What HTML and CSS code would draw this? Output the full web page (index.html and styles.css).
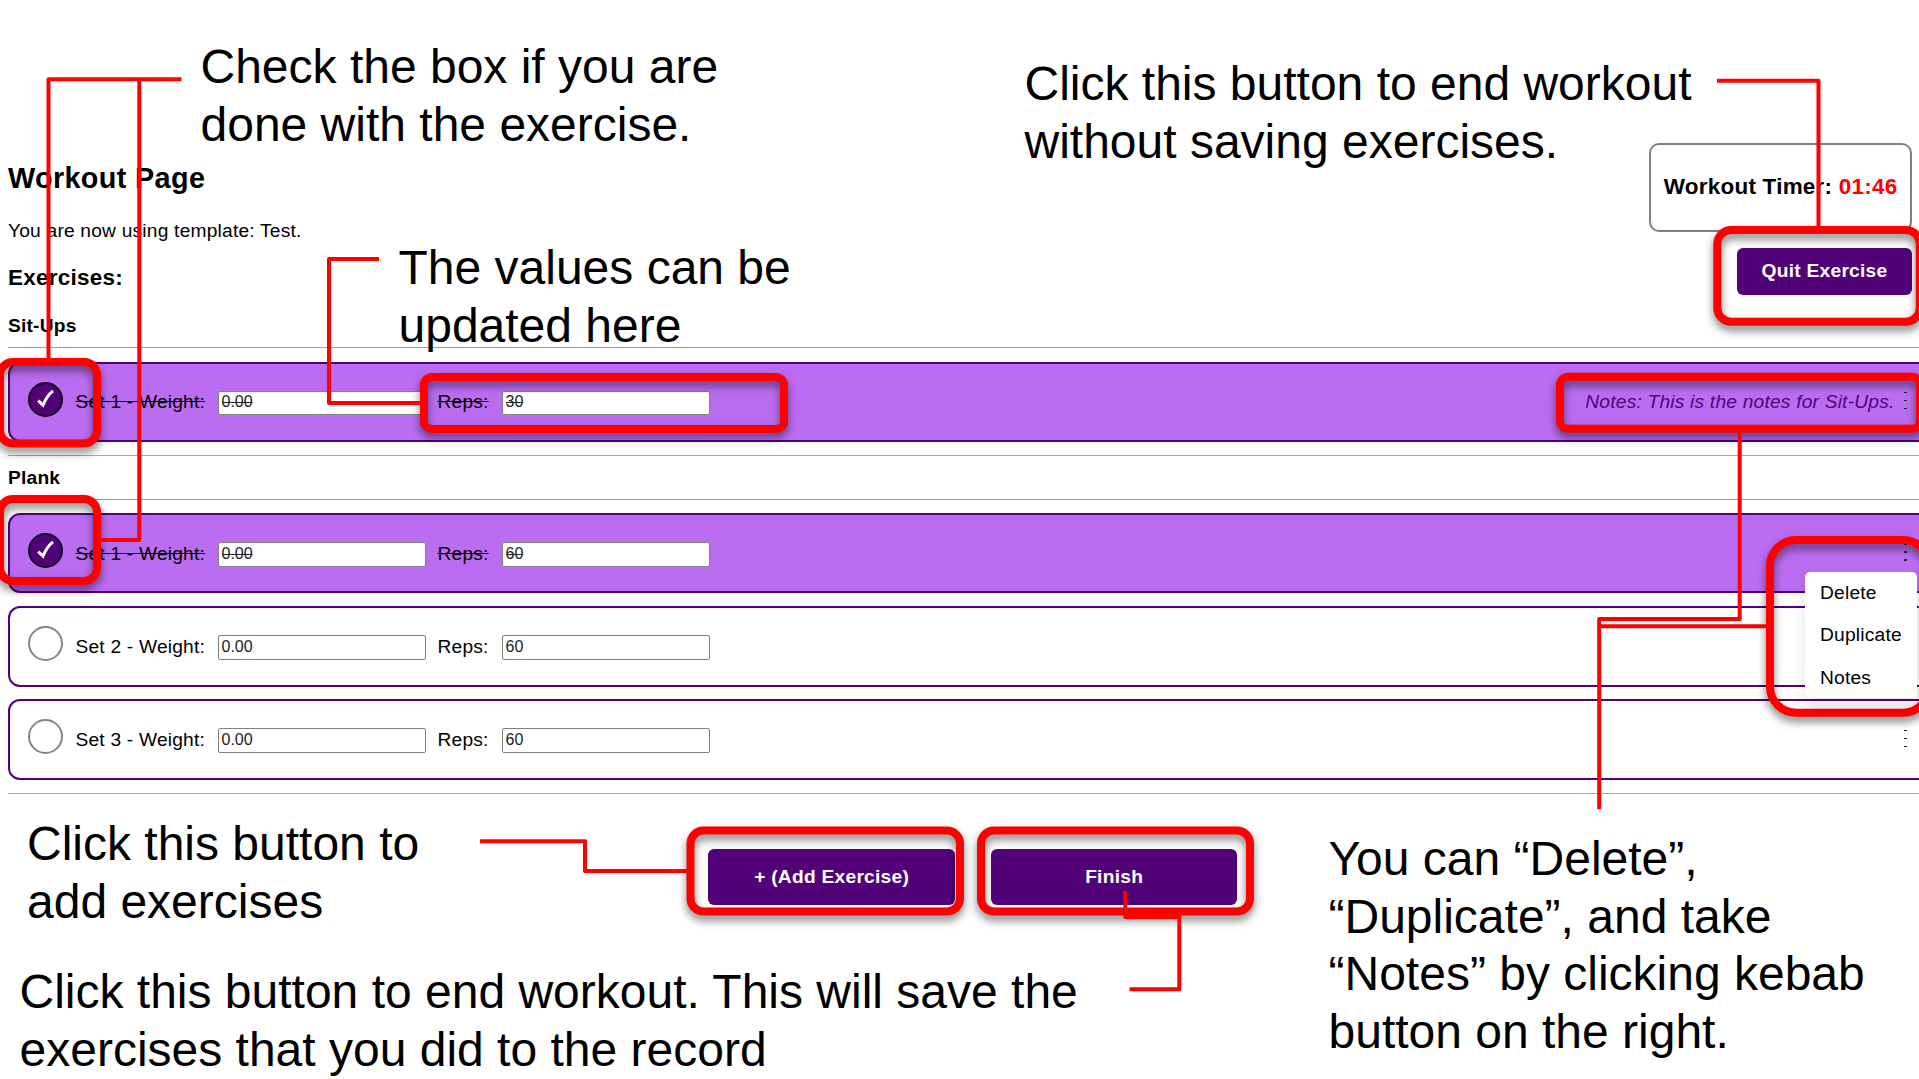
FILE: index.html
```html
<!DOCTYPE html>
<html lang="en">
<head>
<meta charset="utf-8">
<title>Workout Page</title>
<link rel="stylesheet" href="styles.css">
</head>
<body>
<main class="page">
  <header class="top">
    <div class="intro">
      <h2 class="title">Workout Page</h2>
      <p class="template">You are now using template: Test.</p>
      <h3 class="subtitle">Exercises:</h3>
    </div>
    <div class="side">
      <div class="timer">Workout Timer:&nbsp;<span class="time">01:46</span></div>
      <button class="btn quit">Quit Exercise</button>
    </div>
  </header>

  <section class="exercise">
    <h4 class="name">Sit-Ups</h4>
    <div class="sets">
      <div class="set done">
        <span class="check"><svg viewBox="0 0 35 35"><path d="M10.2 18.6L15 23.2Q18.5 14 25 8.8"/></svg></span>
        <span class="weight"><span class="label">Set 1 - Weight:</span></span><input class="field" value="0.00">
        <span class="reps"><span class="label">Reps:</span></span><input class="field" value="30">
        <span class="note">Notes: This is the notes for Sit-Ups.</span>
        <span class="kebab"><i></i><i></i><i></i></span>
      </div>
    </div>
  </section>

  <section class="exercise">
    <h4 class="name">Plank</h4>
    <div class="sets">
      <div class="set done">
        <span class="check"><svg viewBox="0 0 35 35"><path d="M10.2 18.6L15 23.2Q18.5 14 25 8.8"/></svg></span>
        <span class="weight"><span class="label">Set 1 - Weight:</span></span><input class="field" value="0.00">
        <span class="reps"><span class="label">Reps:</span></span><input class="field" value="60">
        <span class="kebab"><i></i><i></i><i></i></span>
        <div class="menu"><span>Delete</span><span>Duplicate</span><span>Notes</span></div>
      </div>
      <div class="set">
        <span class="check"></span>
        <span class="weight"><span class="label">Set 2 - Weight:</span></span><input class="field" value="0.00">
        <span class="reps"><span class="label">Reps:</span></span><input class="field" value="60">
        <span class="kebab"><i></i><i></i><i></i></span>
      </div>
      <div class="set">
        <span class="check"></span>
        <span class="weight"><span class="label">Set 3 - Weight:</span></span><input class="field" value="0.00">
        <span class="reps"><span class="label">Reps:</span></span><input class="field" value="60">
        <span class="kebab"><i></i><i></i><i></i></span>
      </div>
    </div>
  </section>

  <footer class="actions">
    <button class="btn wide">+ (Add Exercise)</button>
    <button class="btn wide">Finish</button>
  </footer>
</main>

<svg class="callouts" viewBox="0 0 1919 1079">
  <g class="frames">
    <rect x="0" y="362" width="97" height="81.5" rx="13"/>
    <rect x="0" y="499" width="97" height="82" rx="13"/>
    <rect x="424" y="377" width="360" height="52" rx="8"/>
    <rect x="1717.3" y="230" width="202.5" height="91.7" rx="14"/>
    <rect x="1560" y="376.7" width="360" height="52" rx="8"/>
    <rect x="1770" y="540" width="159" height="172.7" rx="26"/>
    <rect x="690.5" y="830.5" width="269.5" height="81" rx="13"/>
    <rect x="981" y="830.5" width="269" height="81" rx="13"/>
  </g>
  <g class="lines">
    <path d="M181.5 79.2H48.5V360"/>
    <path d="M139.3 79.2V540H99"/>
    <path d="M379 259H329V403H422"/>
    <path d="M1717 80.7H1818.5V228"/>
    <path d="M1739.7 431V619H1599.2V809.3"/>
    <path d="M1599.2 626.3H1768"/>
    <path d="M480 841.3H585V871H688"/>
    <path d="M1125.3 891V917H1179.3V989.2H1129.5"/>
  </g>
</svg>

<p class="tip tip-check">Check the box if you are<br>done with the exercise.</p>
<p class="tip tip-values">The values can be<br>updated here</p>
<p class="tip tip-quit">Click this button to end workout<br>without saving exercises.</p>
<p class="tip tip-add">Click this button to<br>add exercises</p>
<p class="tip tip-finish">Click this button to end workout. This will save the<br>exercises that you did to the record</p>
<p class="tip tip-menu">You can “Delete”,<br>“Duplicate”, and take<br>“Notes” by clicking kebab<br>button on the right.</p>
</body>
</html>
```
FILE: styles.css
```css
* { box-sizing: border-box; }

body {
  position: relative;
  width: 1919px;
  height: 1079px;
  margin: 0;
  overflow: hidden;
  background: #fff;
  color: #000;
  font-family: "Liberation Sans", Arial, sans-serif;
  font-size: 19.2px;
  letter-spacing: .2px;
  line-height: 22px;
}

h2, h3, h4, p { margin: 0; }

.page {
  width: 1948px;
  padding: 143px 0 0 8px;
}

.top {
  display: flex;
  justify-content: space-between;
  width: 1904px;
  height: 172px;
}

.title {
  margin-top: 18px;
  font-size: 28.8px;
  letter-spacing: .35px;
  line-height: 34px;
}

.template { margin-top: 25px; }

.subtitle {
  margin-top: 23px;
  font-size: 22.46px;
  letter-spacing: .25px;
  line-height: 26px;
}

.side {
  display: flex;
  flex-direction: column;
  align-items: flex-end;
  gap: 16px;
}

.timer {
  display: flex;
  align-items: center;
  height: 89px;
  padding: 0 12.5px 2px;
  border: 2px solid #808080;
  border-radius: 10px;
  font-size: 22.46px;
  font-weight: bold;
  letter-spacing: .25px;
  white-space: nowrap;
}

.time { color: #f00; }

.btn {
  padding: 0;
  border: 0;
  border-radius: 6px;
  background: #510279;
  color: #fff;
  font: bold 19.2px "Liberation Sans", Arial, sans-serif;
  letter-spacing: .25px;
}

.quit {
  width: 175px;
  height: 47px;
  padding-bottom: 2px;
}

.name {
  height: 32px;
  font-size: 19.2px;
  line-height: 22px;
}

.exercise + .exercise .name {
  height: 43px;
  padding-top: 11px;
}

.sets {
  display: flex;
  flex-direction: column;
  gap: 12.8px;
  padding: 13.5px 0 12.7px;
  border-top: 1px solid #a0a0a0;
  border-bottom: 1px solid #a6a6a6;
}

.set {
  position: relative;
  display: flex;
  align-items: flex-start;
  height: 80.4px;
  padding: 18px 39px 0 18px;
  border: 2px solid #510279;
  border-radius: 12px;
}

.set.done {
  background: #bb6df2;
}

.check {
  width: 35px;
  height: 35px;
  margin-right: 12.5px;
  border: 2px solid #858585;
  border-radius: 50%;
}

.done .check {
  border-color: #12001c;
  background: #510279;
}

.check svg {
  display: block;
  width: 35px;
  height: 35px;
  margin: -2px;
  fill: none;
  stroke: #fff;
  stroke-width: 3;
}

.weight, .reps { margin-top: 9.5px; }
.weight { width: 142px; }
.reps { width: 64px; }

.done .label, .done .field { text-decoration: line-through; }

.field {
  width: 208px;
  height: 24.5px;
  margin: 9px 12px 0 0;
  padding: 0 3px 1px;
  border: 1px solid #808080;
  border-radius: 2px;
  background: #fff;
  color: #222;
  font: 16px "Liberation Sans", Arial, sans-serif;
}

.note {
  margin: 9.5px 9.5px 0 auto;
  color: #510279;
  font-style: italic;
}

.kebab {
  display: flex;
  flex-direction: column;
  gap: 6.5px;
  margin: 10.5px 0 0 auto;
}

.note + .kebab { margin-left: 0; }

.kebab i {
  width: 3px;
  height: 1.4px;
  background: #222;
}

.menu {
  position: absolute;
  z-index: 1;
  top: 57px;
  left: 1795px;
  display: flex;
  flex-direction: column;
  gap: 20.6px;
  width: 112px;
  height: 126px;
  padding: 9.5px 15px;
  border-radius: 5px;
  background: #fff;
  box-shadow: 0 8px 16px rgba(0, 0, 0, .12);
}

.actions {
  display: flex;
  gap: 36px;
  padding: 55.6px 0 0 700.4px;
}

.wide {
  width: 246.5px;
  height: 55.5px;
}

.callouts {
  position: absolute;
  top: 0;
  left: 0;
  width: 1919px;
  height: 1079px;
  fill: none;
  stroke: #f00;
}

.frames { stroke-width: 8; }
.frames rect { filter: drop-shadow(0 5px 4px rgba(0, 0, 0, .5)); }
.lines { stroke-width: 4; stroke-linejoin: round; }

.tip {
  position: absolute;
  font-size: 48px;
  letter-spacing: 0;
  line-height: 57.6px;
  white-space: nowrap;
}

.tip-check { top: 38px; left: 200.5px; }
.tip-values { top: 239px; left: 398.5px; }
.tip-quit { top: 55px; left: 1024.5px; }
.tip-add { top: 815px; left: 27px; }
.tip-finish { top: 963px; left: 19.5px; }
.tip-menu { top: 830px; left: 1328.5px; }
```
